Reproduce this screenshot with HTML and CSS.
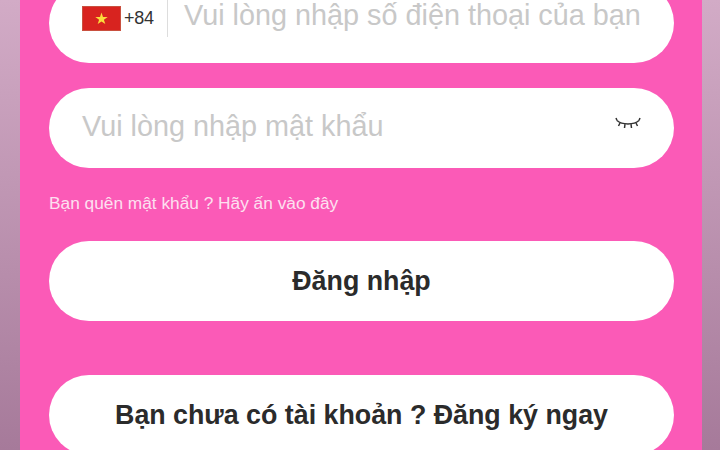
FILE: index.html
```html
<!DOCTYPE html>
<html lang="vi">
<head>
    <meta charset="UTF-8">
    <meta name="viewport" content="width=device-width, initial-scale=1.0">
    <title>Đăng nhập</title>
    <link rel="stylesheet" href="styles.css">
</head>
<body>

    <div class="panel">
        <!-- Phone -->
        <div class="field">
            <div class="country">
                <svg class="flag" viewBox="0 0 39 25" width="39" height="25">
                    <rect x="0.5" y="0.5" width="38" height="24" fill="#d8231f" stroke="#c9503f"/>
                    <polygon points="19.5,6.5 21,10.9 25.7,10.9 21.9,13.7 23.3,18.1 19.5,15.4 15.7,18.1 17.1,13.7 13.3,10.9 18,10.9" fill="#fbdc3c"/>
                </svg>
                <span class="code">+84</span>
            </div>
            <span class="placeholder phone">Vui lòng nhập số điện thoại của bạn</span>
        </div>

        <!-- Password -->
        <div class="field password">
            <span class="placeholder pass">Vui lòng nhập mật khẩu</span>
            <svg class="eye" viewBox="0 0 26 14" width="26" height="14" fill="none" stroke="#333" stroke-width="1.5">
                <path d="M2 3.5C7 8 19 8 24 3.5"/>
                <path d="M2 3.5L1 1M5 6L3.5 9M10 7.2L9.5 11M16 7.2L16.5 11M21 6L22.5 9M24 3.5L25 1"/>
            </svg>
        </div>

        <a class="forgot" href="#">Bạn quên mật khẩu ? Hãy ấn vào đây</a>

        <button class="btn">Đăng nhập</button>
        <button class="btn signup">Bạn chưa có tài khoản ? Đăng ký ngay</button>
    </div>

</body>
</html>
```

FILE: styles.css
```css
* {
    margin: 0;
    padding: 0;
    box-sizing: border-box;
    font-family: "Liberation Sans", Arial, sans-serif;
}

html, body {
    height: 450px;
    overflow: hidden;
}

body {
    background: linear-gradient(180deg, #d2abc6, #a67a9a);
    display: flex;
    justify-content: center;
}

.panel {
    width: 682px;
    height: 500px;
    margin-top: -17px;
    margin-left: 2px;
    padding: 0 28px 0 29px;
    background: #fb5ab7;
    display: flex;
    flex-direction: column;
}

.field {
    height: 80px;
    flex-shrink: 0;
    background: #fff;
    border-radius: 40px;
    display: flex;
    align-items: center;
    padding-left: 33px;
    margin-bottom: 25px;
}

.country {
    display: flex;
    align-items: center;
    gap: 3px;
    height: 37px;
    width: 86px;
    border-right: 1px solid #ddd;
    margin-bottom: 9px;
}

.flag {
    display: block;
}

.code {
    font-size: 18px;
    letter-spacing: -0.2px;
    color: #333;
}

.placeholder {
    font-size: 28.8px;
    color: #c8c8c8;
    white-space: nowrap;
}

.phone {
    margin-left: 16px;
    margin-bottom: 16px;
}

.pass {
    margin-bottom: 4px;
}

.password {
    justify-content: space-between;
    padding-right: 33px;
    margin-bottom: 0;
}

.eye {
    margin-bottom: 8px;
}

.forgot {
    font-size: 17.3px;
    line-height: 18px;
    color: #fde0f0;
    text-decoration: none;
    margin-top: 26px;
}

.btn {
    height: 80px;
    flex-shrink: 0;
    border: none;
    border-radius: 40px;
    background: #fff;
    color: #2b2b2b;
    font-size: 26.8px;
    font-weight: bold;
    margin-top: 29px;
}

.signup {
    margin-top: 54px;
}
```
